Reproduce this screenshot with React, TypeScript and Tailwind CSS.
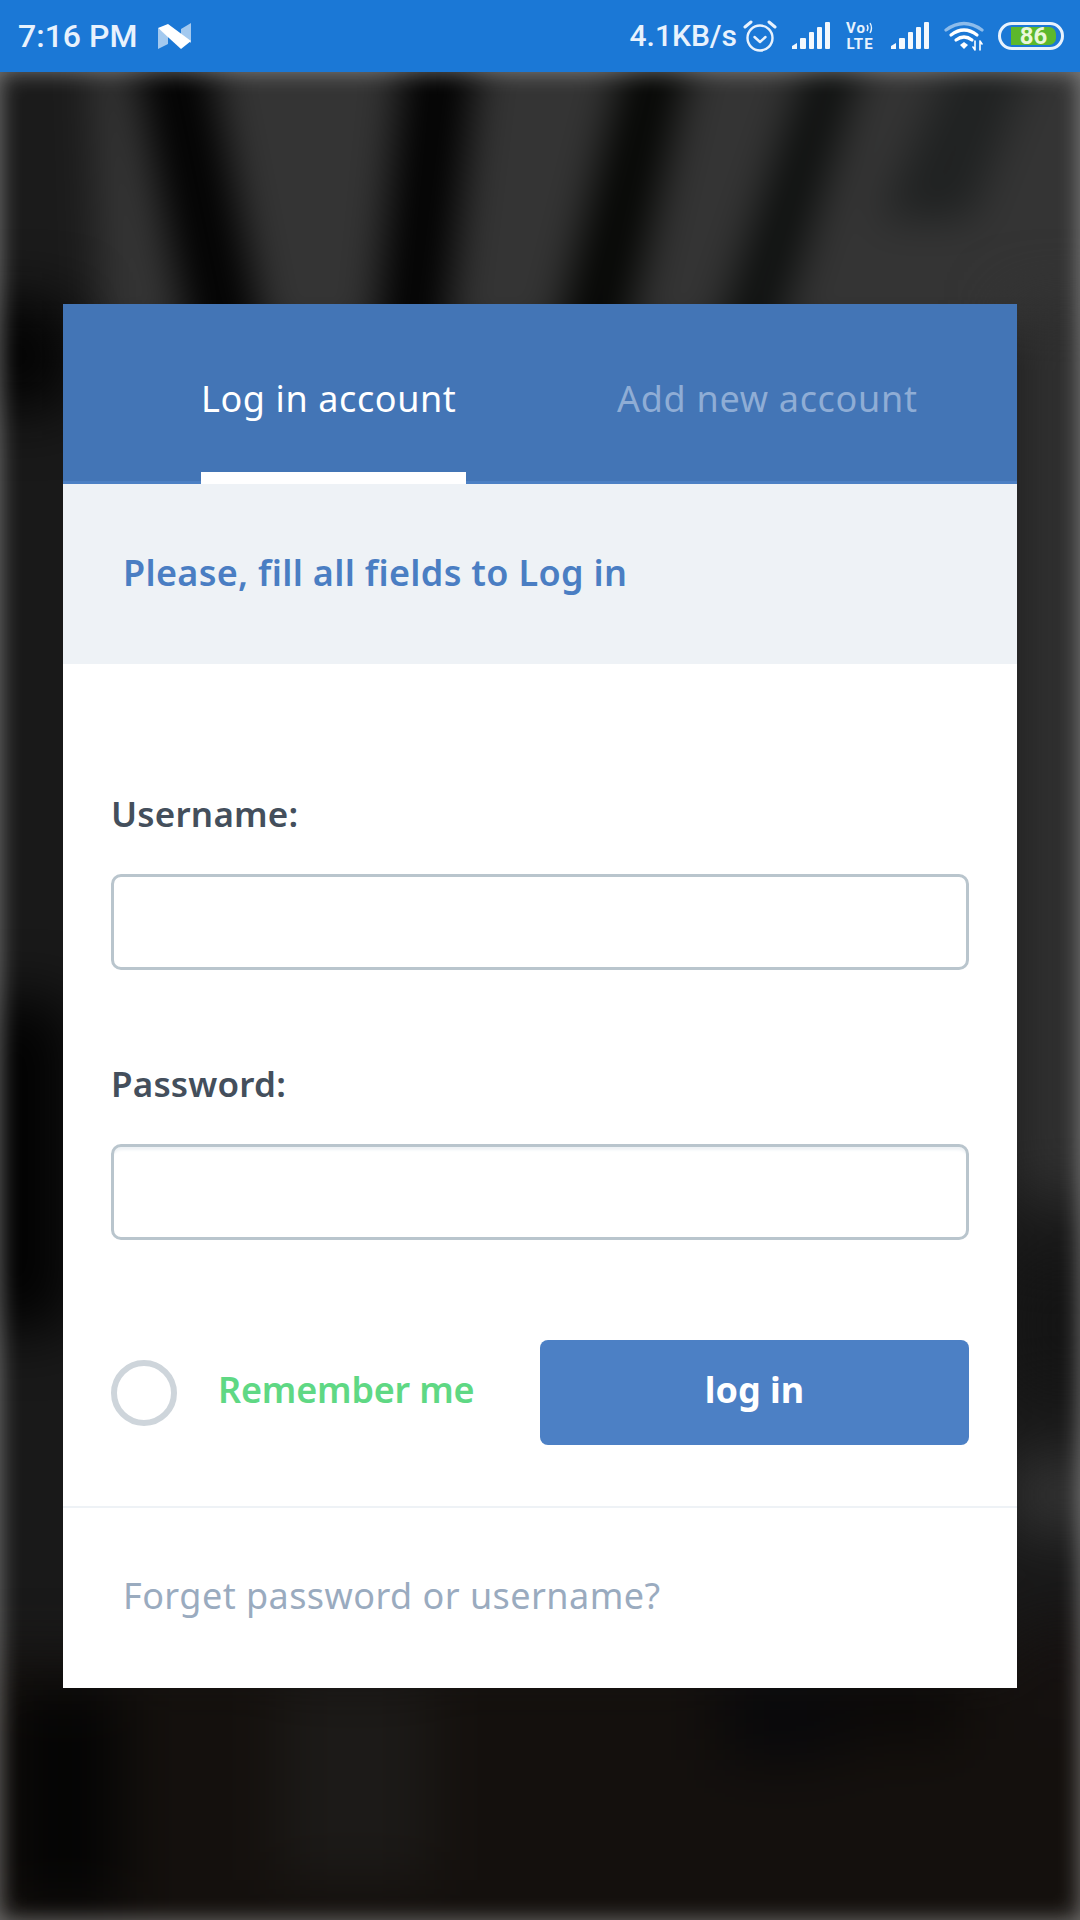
import React from 'react';

const Signal = () => (
  <svg width="38" height="28" viewBox="0 0 38 28" fill="#fff" fillOpacity="0.95">
    <path d="M0 27 L0 24 L5 21 L5 27 Z" />
    <rect x="8" y="16" width="6" height="11" rx="1" />
    <rect x="17" y="10" width="5" height="17" rx="1" />
    <rect x="25" y="5" width="5" height="22" rx="1" />
    <rect x="33" y="0" width="5" height="27" rx="1" />
  </svg>
);

const StatusBar = () => (
  <div className="relative z-10 flex h-[72px] items-center justify-between bg-[#1b78d6] pl-[18px] pr-[16px] font-['Roboto',sans-serif] font-medium text-[#e8f2fd]">
    <div className="flex items-center">
      <span className="text-[32px] leading-none">7:16 PM</span>
      <svg className="ml-[21px]" width="33" height="26" viewBox="0 0 33 26">
        <path d="M0 5 L10 13 L10 21 L0 26 Z M23 6 L33 0 L33 20 L23 12 Z" fill="#fff" fillOpacity="0.6" />
        <path d="M0 5 L10 1 L33 18 L23 26 Z" fill="#fff" />
      </svg>
    </div>
    <div className="flex items-center">
      <span className="text-[30px] leading-none">4.1KB/s</span>
      <svg className="ml-[6px]" width="34" height="34" viewBox="0 0 34 34" fill="none" stroke="#e8f2fd" strokeLinecap="round">
        <circle cx="17" cy="19" r="12.5" strokeWidth="2.4" />
        <path d="M11.5 18 L17 23 L22.5 18" strokeWidth="2.4" strokeLinejoin="round" />
        <path d="M2 8 L8 3 M32 8 L26 3" strokeWidth="3" />
      </svg>
      <div className="ml-[15px]"><Signal /></div>
      <div className="ml-[14px] flex w-[32px] flex-col items-center gap-[1px] text-[15px] font-bold leading-[15px] tracking-[1px]">
        <span className="flex items-center">
          Vo
          <svg width="8" height="12" viewBox="0 0 8 12" fill="none" stroke="#e8f2fd" strokeWidth="1.4">
            <path d="M1 3 Q3 6 1 9 M4 1 Q7 6 4 11" />
          </svg>
        </span>
        <span>LTE</span>
      </div>
      <div className="ml-[15px]"><Signal /></div>
      <svg className="ml-[15px]" width="40" height="30" viewBox="0 0 40 30" fill="none" strokeLinecap="round">
        <path d="M2 9 Q20 -4 38 9" stroke="#fff" strokeOpacity="0.5" strokeWidth="3.2" />
        <path d="M7 14 Q20 4 33 14" stroke="#fff" strokeWidth="3.2" />
        <path d="M12 19 Q20 13 28 19" stroke="#fff" strokeWidth="3.2" />
        <path d="M16 24 L20 21 L24 24 L20 28 Z" fill="#fff" />
        <path d="M31 20 V29 M29 26 L31 29 M36 20 V29 M36 20 L38 23" stroke="#fff" strokeWidth="1.6" />
      </svg>
      <div className="relative ml-[14px] flex h-[28px] w-[66px] items-center rounded-[14px] border-[3px] border-[#e8f2fd] pl-[10px]">
        <div className="flex h-[18px] w-[45px] items-center justify-center rounded-r-[7px] bg-[#5cb82c] text-[24px] font-bold leading-none text-[#e9f7da]">
          86
        </div>
      </div>
    </div>
  </div>
);

const Backdrop = () => (
  <svg className="absolute inset-0" width="1080" height="1920" viewBox="0 0 1080 1920">
    <defs>
      <filter id="soft" x="-10%" y="-10%" width="120%" height="120%" colorInterpolationFilters="sRGB">
        <feGaussianBlur stdDeviation="20" />
      </filter>
      <filter id="softer" x="-10%" y="-10%" width="120%" height="120%" colorInterpolationFilters="sRGB">
        <feGaussianBlur stdDeviation="30" />
      </filter>
    </defs>
    <rect width="1080" height="1920" fill="#191919" />
    <g filter="url(#soft)">
      <rect x="-40" y="40" width="1160" height="300" fill="#343434" />
      <polygon points="-40,40 90,40 100,340 -40,340" fill="#1b1b1b" />
      <polygon points="130,40 205,40 265,340 190,340" fill="#030303" />
      <polygon points="405,40 480,40 445,340 375,340" fill="#030303" />
      <polygon points="630,40 695,40 625,340 555,340" fill="#060705" />
      <polygon points="815,40 870,40 775,340 715,340" fill="#0e100f" />
      <polygon points="960,40 1040,40 970,220 880,220" fill="#202222" />
    </g>
    <g filter="url(#softer)">
      <rect x="-40" y="300" width="110" height="110" fill="#030303" />
      <rect x="1010" y="300" width="110" height="900" fill="#303030" />
      <rect x="-40" y="1000" width="110" height="330" fill="#020202" />
      <rect x="1010" y="1260" width="110" height="130" fill="#141414" />
      <rect x="1010" y="1460" width="110" height="70" fill="#353535" />
      <rect x="-40" y="1660" width="1160" height="300" fill="#14100d" />
      <rect x="1010" y="1620" width="110" height="100" fill="#151110" />
      <rect x="10" y="1690" width="110" height="220" fill="#040404" />
      <rect x="280" y="1680" width="150" height="200" fill="#1c1a18" />
      <rect x="720" y="1680" width="120" height="80" fill="#08080b" />
      <rect x="840" y="1680" width="120" height="60" fill="#0a0807" />
    </g>
  </svg>
);

const Field = ({ label, inset }: { label: string; inset?: boolean }) => (
  <div className="flex flex-col">
    <label className="h-[58px] text-[35px] font-semibold leading-[58px] tracking-[0.2px] text-[#444f5c]">{label}</label>
    <div className={`mt-[31px] h-[96px] rounded-[10px] border-[3px] border-[#b9c5cd] bg-white ${inset ? 'shadow-[inset_0_5px_3px_-2px_#eef2f5]' : ''}`} />
  </div>
);

export default function App() {
  return (
    <div className="relative h-[1920px] w-[1080px] overflow-hidden bg-[#191919] font-['Noto_Sans',sans-serif]">
      <Backdrop />
      <div className="absolute inset-x-0 bottom-0 top-[72px] shadow-[inset_0_0_22px_rgba(255,255,255,0.42)]" />
      <StatusBar />

      <div className="relative mx-[63px] mt-[232px] flex h-[1384px] w-[954px] flex-col bg-white">
        <div className="flex h-[180px] border-b-[3px] border-[#4c80c4] bg-[#4375b6] pl-[138px]">
          <div className="mb-[-3px] flex w-[265px] items-start border-b-[12px] border-white pt-[72px]">
            <span className="whitespace-nowrap text-[36px] leading-[46px] tracking-[0.6px] text-white">Log in account</span>
          </div>
          <div className="ml-[151px] pt-[72px]">
            <span className="whitespace-nowrap text-[36px] leading-[46px] tracking-[0.7px] text-[#8fadd5]">Add new account</span>
          </div>
        </div>

        <div className="flex h-[180px] items-center bg-[#eef2f6] pb-[2px] pl-[60px]">
          <span className="text-[36px] font-semibold tracking-[0.3px] text-[#4a7ec3]">Please, fill all fields to Log in</span>
        </div>

        <div className="flex flex-col px-[48px] pt-[121px]">
          <Field label="Username:" />
          <div className="mt-[85px]">
            <Field label="Password:" inset />
          </div>
          <div className="mt-[100px] flex h-[105px] items-center">
            <div className="h-[66px] w-[66px] rounded-full border-[6px] border-[#ced5db]" />
            <span className="ml-[41px] pb-[6px] text-[36px] font-semibold tracking-[-0.2px] text-[#5fd884]">Remember me</span>
            <button className="ml-auto flex h-[105px] w-[429px] items-center justify-center rounded-[8px] bg-[#4c80c5] pb-[6px] text-[36px] font-bold text-white">
              log in
            </button>
          </div>
        </div>

        <div className="mt-[61px] h-[2px] bg-[#eef2f6]" />
        <div className="flex flex-1 items-center pb-[4px] pl-[60px]">
          <span className="text-[36px] tracking-[0.45px] text-[#9aabbf]">Forget password or username?</span>
        </div>
      </div>
    </div>
  );
}
